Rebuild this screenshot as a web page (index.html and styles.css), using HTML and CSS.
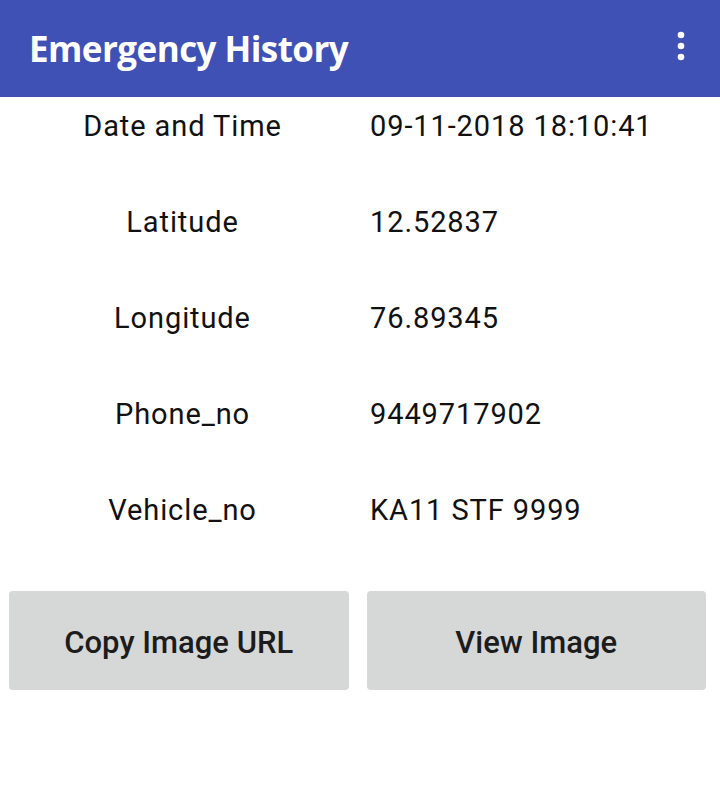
FILE: index.html
```html
<!DOCTYPE html>
<html>
<head>
<meta charset="utf-8">
<link rel="stylesheet" href="styles.css">
</head>
<body>
<header class="appbar">
  <h1 class="title">Emergency History</h1>
  <svg class="menu" width="12" height="34" viewBox="0 0 12 34"><circle cx="6" cy="6" r="3.3" fill="#fff"/><circle cx="6" cy="17" r="3.3" fill="#fff"/><circle cx="6" cy="28" r="3.3" fill="#fff"/></svg>
</header>
<main class="content">
  <div class="table">
    <div class="label">Date and Time</div><div class="value">09-11-2018 18:10:41</div>
    <div class="label">Latitude</div><div class="value">12.52837</div>
    <div class="label">Longitude</div><div class="value">76.89345</div>
    <div class="label">Phone_no</div><div class="value">9449717902</div>
    <div class="label">Vehicle_no</div><div class="value">KA11 STF 9999</div>
  </div>
  <div class="actions">
    <button class="btn">Copy Image URL</button>
    <button class="btn">View Image</button>
  </div>
</main>
</body>
</html>
```
FILE: styles.css
```css
html, body {
  margin: 0;
  padding: 0;
  background: #ffffff;
}
body {
  width: 720px;
  height: 788px;
  font-family: Roboto, "Noto Sans", sans-serif;
  color: #111;
}
.appbar {
  height: 97px;
  background: #3f51b5;
  display: flex;
  align-items: center;
  justify-content: space-between;
  padding: 0 33px 0 29px;
  box-sizing: border-box;
}
.title {
  margin: 0;
  color: #fff;
  font-family: "Open Sans", sans-serif;
  font-weight: 700;
  font-size: 35px;
  letter-spacing: -0.55px;
}
.menu {
  display: block;
  margin-top: -5px;
}
.content {
  padding-top: 10px;
}
.table {
  display: grid;
  grid-template-columns: 365px 1fr;
  row-gap: 58px;
  font-size: 29px;
  line-height: 38px;
  letter-spacing: 0.9px;
}
.label {
  text-align: center;
}
.value {
  padding-left: 5px;
}
.actions {
  display: flex;
  gap: 18px;
  padding: 0 14px 0 9px;
  margin-top: 62px;
}
.btn {
  flex: 1;
  height: 99px;
  border: none;
  border-radius: 4px;
  background: #d6d7d7;
  font-family: Roboto, sans-serif;
  font-weight: 500;
  font-size: 31px;
  color: #1c1c1c;
  letter-spacing: 0;
  padding: 4px 0 0 0;
}
```
